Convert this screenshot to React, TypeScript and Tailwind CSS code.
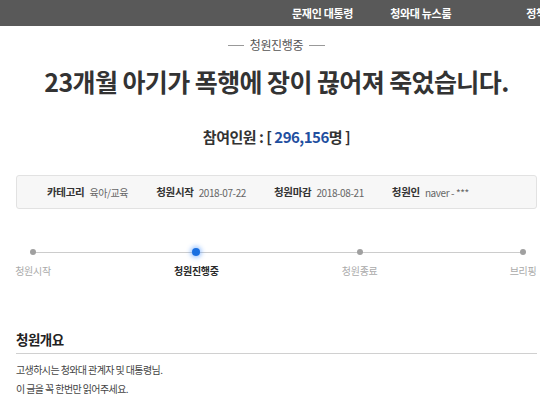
import React from "react";

const steps = [
  { label: "청원시작", active: false },
  { label: "청원진행중", active: true },
  { label: "청원종료", active: false },
  { label: "브리핑", active: false },
];

const info = [
  { label: "카테고리", value: "육아/교육" },
  { label: "청원시작", value: "2018-07-22" },
  { label: "청원마감", value: "2018-08-21" },
  { label: "청원인", value: "naver - ***" },
];

function Header() {
  return (
    <div className="h-[26px] bg-[#595959] flex items-center pl-[292px] whitespace-nowrap overflow-hidden text-white text-[11px] font-bold tracking-[-0.3px]">
      <span>문재인 대통령</span>
      <span className="ml-[37px]">청와대 뉴스룸</span>
      <span className="ml-[75px]">정책브리핑</span>
    </div>
  );
}

function Timeline() {
  return (
    <div className="relative mt-[39px] -ml-[5px] -mr-[8px]">
      <div className="absolute left-[22px] right-[22px] top-[4px] h-px bg-[#cccccc]" />
      <div className="relative flex justify-between">
        {steps.map((s) => (
          <div key={s.label} className="w-[44px] flex flex-col items-center">
            <div className="h-[8px] flex items-center">
              {s.active ? (
                <div className="w-[8px] h-[8px] rounded-full bg-[#1a6fe0] shadow-[0_0_4px_2px_rgba(60,140,255,0.45)]" />
              ) : (
                <div className="w-[6px] h-[6px] rounded-full bg-[#a0a0a0]" />
              )}
            </div>
            <span
              className={
                s.active
                  ? "mt-[8px] text-[10px] leading-[14px] font-bold text-[#2a2a2a] whitespace-nowrap tracking-[-0.3px]"
                  : "mt-[8px] text-[10px] leading-[14px] text-[#aaaaaa] whitespace-nowrap tracking-[-0.3px]"
              }
            >
              {s.label}
            </span>
          </div>
        ))}
      </div>
    </div>
  );
}

export default function App() {
  return (
    <div className="w-[540px] h-[399px] overflow-hidden bg-white font-['Noto_Sans_CJK_KR','Noto_Sans',sans-serif]">
      <Header />
      <div className="pl-4 pr-[3px]">
        <div className="mt-[11px] flex items-center justify-center gap-[6px] text-[12px] leading-[16px] text-[#555555]">
          <div className="w-[16px] h-px bg-[#999999]" />
          <span className="tracking-[-0.3px]">청원진행중</span>
          <div className="w-[16px] h-px bg-[#999999]" />
        </div>
        <h1 className="mt-[13px] text-center text-[25px] leading-[30px] font-bold text-[#333333] tracking-[-0.6px]">
          23개월 아기가 폭행에 장이 끊어져 죽었습니다.
        </h1>
        <p className="mt-[31px] text-center text-[15px] leading-[20px] font-bold text-[#333333] tracking-[-0.5px]">
          참여인원 : [ <span className="text-[#1f4fa0]">296,156</span>명 ]
        </p>
        <div className="mt-[28px] h-[34px] bg-[#f7f7f7] border border-[#e2e2e2] rounded-[3px] flex items-center pl-[30px] gap-[28px] tracking-[-0.3px]">
          {info.map((i) => (
            <div key={i.label} className="flex items-center gap-[5px] whitespace-nowrap">
              <span className="text-[10.5px] font-bold text-[#333333]">{i.label}</span>
              <span className="text-[10px] text-[#666666] tracking-[-0.4px]">{i.value}</span>
            </div>
          ))}
        </div>
        <Timeline />
        <h2 className="mt-[52px] pb-[5px] border-b border-[#d0d0d0] text-[13.5px] leading-[18px] font-bold text-[#222222] tracking-[-0.5px]">
          청원개요
        </h2>
        <div className="mt-[6px] text-[10px] leading-[19px] text-[#444444] tracking-[-0.6px]">
          <p>고생하시는 청와대 관계자 및 대통령님.</p>
          <p>이 글을 꼭 한번만 읽어주세요.</p>
        </div>
      </div>
    </div>
  );
}
